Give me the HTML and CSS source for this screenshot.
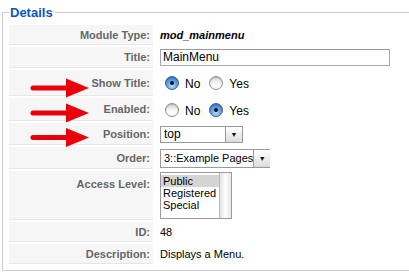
FILE: index.html
```html
<!DOCTYPE html>
<html>
<head>
<meta charset="utf-8">
<link rel="stylesheet" href="styles.css">
</head>
<body>
<div class="page">
  <fieldset class="details">
    <legend>Details</legend>
    <div class="admingrid">
      <div class="key">Module Type:</div>
      <div class="val"><strong class="modname">mod_mainmenu</strong></div>

      <div class="key">Title:</div>
      <div class="val"><div class="textbox">MainMenu</div></div>

      <div class="key">Show Title:</div>
      <div class="val">
        <span class="radio on"></span><span class="rlabel">No</span>
        <span class="radio second"></span><span class="rlabel">Yes</span>
      </div>

      <div class="key">Enabled:</div>
      <div class="val">
        <span class="radio"></span><span class="rlabel">No</span>
        <span class="radio on second"></span><span class="rlabel">Yes</span>
      </div>

      <div class="key">Position:</div>
      <div class="val"><div class="select sel-pos"><span class="sv">top</span><span class="sb">&#9660;</span></div></div>

      <div class="key">Order:</div>
      <div class="val"><div class="select sel-order"><span class="sv">3::Example Pages</span><span class="sb">&#9660;</span></div></div>

      <div class="key key-top">Access Level:</div>
      <div class="val val-top">
        <div class="listbox">
          <div class="opts">
            <div class="opt sel">Public</div>
            <div class="opt">Registered</div>
            <div class="opt">Special</div>
          </div>
          <div class="scroll"></div>
        </div>
      </div>

      <div class="key">ID:</div>
      <div class="val">48</div>

      <div class="key">Description:</div>
      <div class="val">Displays a Menu.</div>
    </div>
  </fieldset>
  <svg class="arrows" width="100" height="150" viewBox="0 0 100 150">
    <g fill="#e8000b">
      <path d="M33 80.5 L66 80.5 L66 73.5 L89 83 L66 92.5 L66 85.5 L33 85.5 A2.5 2.5 0 0 1 33 80.5 Z"/>
      <path d="M33 105.5 L66 105.5 L66 98.5 L89 108 L66 117.5 L66 110.5 L33 110.5 A2.5 2.5 0 0 1 33 105.5 Z"/>
      <path d="M33 130 L66 130 L66 123 L89 132.5 L66 142 L66 135 L33 135 A2.5 2.5 0 0 1 33 130 Z"/>
    </g>
  </svg>
</div>
</body>
</html>
```
FILE: styles.css
```css
html, body {
  margin: 0;
  padding: 0;
  background: #fff;
  overflow: hidden;
}
body {
  font-family: "Liberation Sans", Arial, sans-serif;
  font-size: 11px;
  color: #000;
}
.page {
  position: relative;
  width: 409px;
  height: 279px;
}
.details {
  margin: 5px 0 0 2px;
  width: 420px;
  border: 1px solid #cccccc;
  padding: 5px 0 6px 6px;
  box-sizing: border-box;
}
.details legend {
  color: #0b55c4;
  font-weight: bold;
  font-size: 13px;
  line-height: 15px;
  padding: 0 2px 0 1px;
  margin: 0;
}
.admingrid {
  display: grid;
  grid-template-columns: 144px 1fr;
  grid-template-rows: 20px 21px 26px 23px 22px 22px 49px 20px 20px;
  row-gap: 2px;
}
.key {
  box-sizing: border-box;
  padding-right: 3px;
  text-align: right;
  font-weight: bold;
  color: #666;
  background: #f6f6f6;
  border-bottom: 1px solid #e6e6e6;
  display: flex;
  align-items: center;
  justify-content: flex-end;
  white-space: nowrap;
}
.key-top {
  align-items: flex-start;
  padding-top: 7px;
}
.val {
  padding-left: 7px;
  color: #000;
  display: flex;
  align-items: center;
  white-space: nowrap;
}
.val-top {
  align-items: flex-start;
}
.modname {
  font-style: italic;
  font-weight: bold;
  font-size: 11px;
}
.textbox {
  width: 224px;
  height: 15px;
  border: 1px solid #aaa;
  border-top-color: #999;
  padding: 0 2px;
  font-size: 12px;
  line-height: 15px;
  color: #000;
}
.radio {
  flex: none;
  width: 12px;
  height: 12px;
  border-radius: 50%;
  border: 1px solid #8e8e8e;
  background: linear-gradient(#d8d8d8, #ffffff 70%, #f4f4f4);
  box-shadow: inset 0 1px 1px rgba(0,0,0,0.2);
  margin: 0 6px 0 5px;
  position: relative;
}
.radio.second { margin-left: 9px; }
.radio.on {
  border-color: #3b5f98;
  background: radial-gradient(circle at 50% 75%, #b5dcff 0, #6aa7ec 40%, #2e6cc7 100%);
}
.radio.on::after {
  content: "";
  position: absolute;
  left: 4px;
  top: 4px;
  width: 4px;
  height: 4px;
  border-radius: 50%;
  background: #111;
}
.rlabel {
  font-size: 12px;
  padding-top: 2px;
}
.select {
  display: flex;
  height: 15px;
  border: 1px solid #9a9a9a;
  background: #fff;
  font-size: 12px;
  line-height: 15px;
  white-space: nowrap;
}
.sel-pos { width: 81px; }
.sel-order { width: 108px; height: 17px; line-height: 17px; font-size: 11px; }
.select .sv {
  flex: 1;
  padding-left: 3px;
  color: #000;
}
.select .sb {
  flex: none;
  width: 16px;
  border-left: 1px solid #9a9a9a;
  background: linear-gradient(#ffffff, #dcdcdc);
  font-size: 7px;
  text-align: center;
  color: #111;
}
.listbox {
  display: flex;
  width: 70px;
  height: 45px;
  border: 1px solid #9a9a9a;
  margin-top: 1px;
  background: #fff;
}
.opts {
  flex: 1;
  padding-top: 2px;
}
.opt {
  font-size: 11px;
  line-height: 12px;
  height: 12px;
  padding-left: 2px;
  color: #000;
}
.opt.sel { background: #d4d4d4; }
.scroll {
  width: 11px;
  border-left: 1px solid #bdbdbd;
  background: linear-gradient(90deg, #e2e2e2, #ffffff 50%, #e6e6e6);
}
.arrows {
  position: absolute;
  left: 0;
  top: 0;
}
```
